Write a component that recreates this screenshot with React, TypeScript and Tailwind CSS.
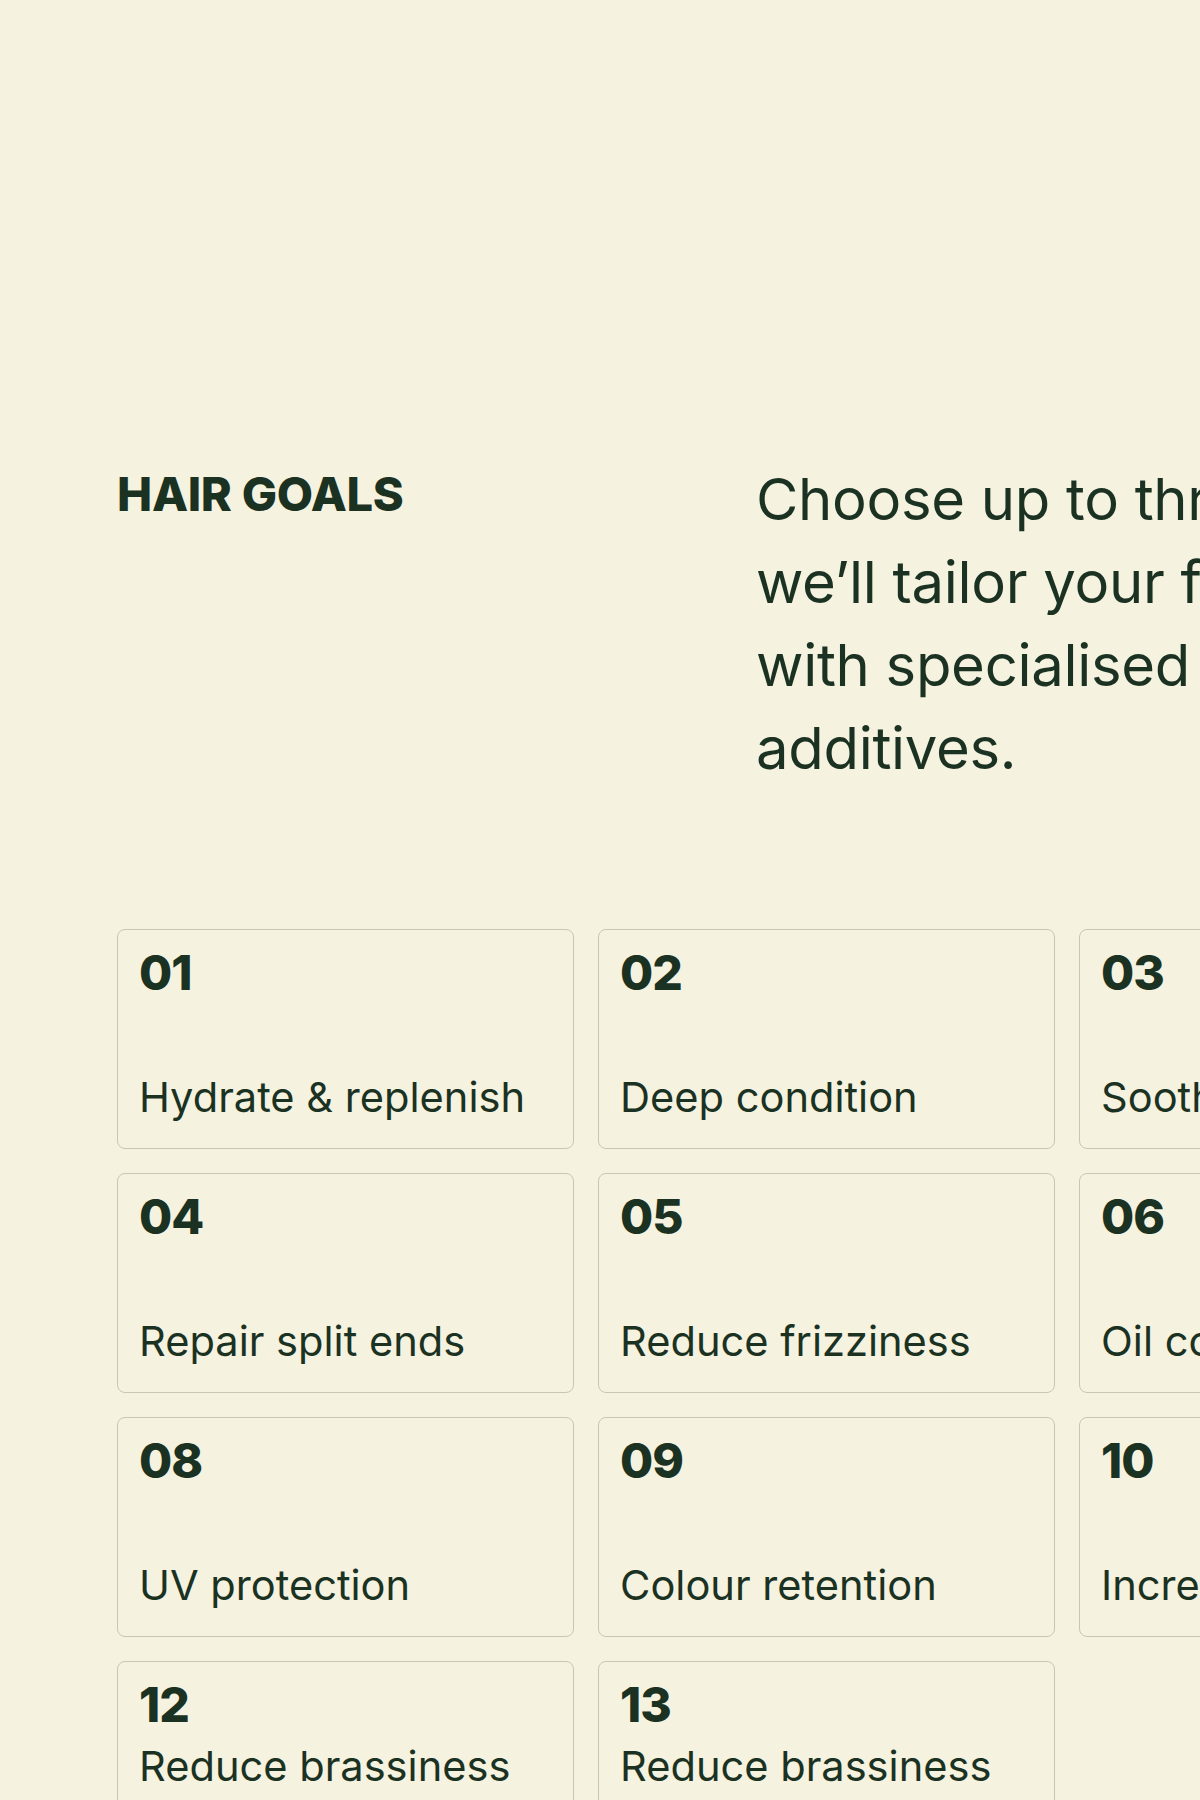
import React from "react";

type Goal = { n: string; label: string };

const rows: Goal[][] = [
  [
    { n: "01", label: "Hydrate & replenish" },
    { n: "02", label: "Deep condition" },
    { n: "03", label: "Soothe scalp" },
  ],
  [
    { n: "04", label: "Repair split ends" },
    { n: "05", label: "Reduce frizziness" },
    { n: "06", label: "Oil control" },
  ],
  [
    { n: "08", label: "UV protection" },
    { n: "09", label: "Colour retention" },
    { n: "10", label: "Increase volume" },
  ],
];

const last: Goal[] = [
  { n: "12", label: "Reduce brassiness" },
  { n: "13", label: "Reduce brassiness" },
];

function Card({ g, tall }: { g: Goal; tall: boolean }) {
  return (
    <div
      className={
        "flex flex-col rounded-[8px] border border-[#c9c6b4] bg-[#f5f2e0] px-[21px] pt-[19px] " +
        (tall ? "h-[220px] justify-between pb-[29px]" : "gap-[17px] pb-[30px]")
      }
    >
      <div className="text-[48px] font-extrabold leading-none tracking-[-1px]">{g.n}</div>
      <div className="whitespace-nowrap text-[41.6px] font-normal leading-none">{g.label}</div>
    </div>
  );
}

export default function App() {
  return (
    <div
      className="w-[1200px] min-h-[1800px] overflow-hidden bg-[#f5f2e0] text-[#1b3223]"
      style={{ fontFamily: "Inter, 'Liberation Sans', sans-serif" }}
    >
      <div className="pl-[117px] pt-[458px]">
        <div className="flex items-start">
          <h2 className="mt-[12px] w-[639px] shrink-0 text-[47px] font-extrabold leading-none tracking-[-0.3px]">
            HAIR GOALS
          </h2>
          <p className="whitespace-nowrap text-[58px] font-normal leading-[83px] tracking-[-0.3px]">
            Choose up to three goals and
            <br />
            we’ll tailor your formula
            <br />
            with specialised
            <br />
            additives.
          </p>
        </div>
        <div className="mt-[139px] grid w-max grid-cols-[457px_457px_457px] gap-[24px]">
          {rows.map((r) => r.map((g) => <Card key={g.n} g={g} tall />))}
          {last.map((g) => (
            <Card key={g.n} g={g} tall={false} />
          ))}
        </div>
      </div>
    </div>
  );
}
